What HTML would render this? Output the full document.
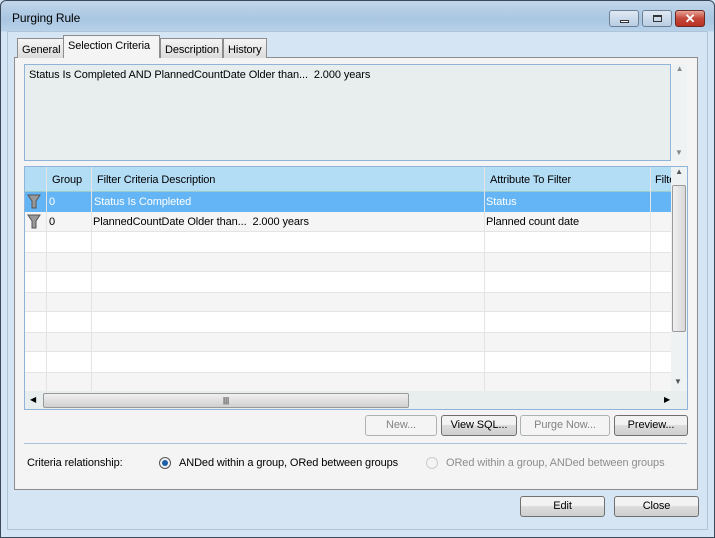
<!DOCTYPE html>
<html><head><meta charset="utf-8"><style>
*{margin:0;padding:0;box-sizing:border-box}
body{width:715px;height:538px;overflow:hidden;font-family:"Liberation Sans",sans-serif;font-size:11px;color:#000;background:#d6e5f4;letter-spacing:-0.1px}
.a{position:absolute}
.win{left:0;top:0;width:715px;height:538px;border:1px solid #3a4a5a;border-radius:6px 6px 0 0;background:linear-gradient(#c2d6ea,#a9c6e2 18px,#b9d1ea 30px,#d6e5f4 31px);}
.tab{height:20px;border:1px solid #8d8d8d;border-bottom:none;background:linear-gradient(#f4f4f4,#dcdcdc);padding:5px 0 0 4px;font-size:11px}
.btn{height:21px;border:1px solid #707070;border-radius:3px;background:linear-gradient(#f2f2f2 45%,#dcdcdc 50%,#cfcfcf);text-align:center;line-height:19px;font-size:11px}
.dis{border-color:#adb2b5;background:#f4f4f4;color:#838383}
.vl{width:1px;background:#e4e4e4}
.cell{line-height:20px}
</style></head><body>
<div class="a win"></div>
<div class="a" style="left:12px;top:11px;font-size:12px">Purging Rule</div>
<div class="a" style="left:609px;top:10px;width:30px;height:17px;border:1px solid #6d7f93;border-radius:3px;background:linear-gradient(#dfe9f4,#b8cde3)"><div class="a" style="left:10px;top:9px;width:9px;height:3px;border:1px solid #333;background:#fff"></div></div>
<div class="a" style="left:642px;top:10px;width:30px;height:17px;border:1px solid #6d7f93;border-radius:3px;background:linear-gradient(#dfe9f4,#b8cde3)"><div class="a" style="left:10px;top:4px;width:9px;height:7px;border:1px solid #333;border-top-width:2px"></div></div>
<div class="a" style="left:675px;top:10px;width:30px;height:17px;border:1px solid #6b2a22;border-radius:3px;background:linear-gradient(#e8a396,#c4473a 50%,#b93024);color:#fff;font-weight:bold;text-align:center;line-height:15px;font-size:13px">✕</div>

<div class="a" style="left:7px;top:31px;width:701px;height:499px;border:1px solid #b0c4d8;background:#d6e5f4"></div>
<div class="a" style="left:14px;top:57px;width:684px;height:433px;border:1px solid #8d8d8d;background:#f4f4f4"></div>
<div class="a tab" style="left:17px;top:38px;width:47px">General</div>
<div class="a tab" style="left:160px;top:38px;width:63px">Description</div>
<div class="a tab" style="left:223px;top:38px;width:44px">History</div>
<div class="a tab" style="left:63px;top:35px;width:97px;height:23px;background:#f4f4f4;padding-top:4px">Selection Criteria</div>

<div class="a" style="left:24px;top:64px;width:647px;height:97px;border:1px solid #8fb3d9;background:#e7eeed;padding:4px 4px"><span>Status Is Completed AND PlannedCountDate Older than...&nbsp; 2.000 years</span></div>
<div class="a" style="left:672px;top:64px;width:15px;height:97px;background:#eef2f2;color:#888;font-size:8px;text-align:center">▲<div class="a" style="left:3px;top:84px">▼</div></div>

<div class="a" style="left:24px;top:166px;width:664px;height:244px;border:1px solid #8fb3d9;background:#fff"></div>
<div class="a" style="left:25px;top:167px;width:646px;height:25px;background:#b3dcf5;border-bottom:1px solid #9cc"></div>
<div class="a cell" style="left:52px;top:170px">Group</div>
<div class="a cell" style="left:97px;top:170px">Filter Criteria Description</div>
<div class="a cell" style="left:490px;top:170px">Attribute To Filter</div>
<div class="a cell" style="left:655px;top:170px;width:16px;overflow:hidden">Filter</div>
<div class="a" style="left:25px;top:192px;width:646px;height:20px;background:#64b5f6"></div>
<div class="a" style="left:25px;top:212px;width:646px;height:20px;background:#f5f5f5;border-bottom:1px solid #e4e4e4"></div>
<div class="a" style="left:25px;top:252px;width:646px;height:20px;background:#f5f5f5;border-top:1px solid #e4e4e4;border-bottom:1px solid #e4e4e4"></div>
<div class="a" style="left:25px;top:292px;width:646px;height:20px;background:#f5f5f5;border-top:1px solid #e4e4e4;border-bottom:1px solid #e4e4e4"></div>
<div class="a" style="left:25px;top:332px;width:646px;height:20px;background:#f5f5f5;border-top:1px solid #e4e4e4;border-bottom:1px solid #e4e4e4"></div>
<div class="a" style="left:25px;top:372px;width:646px;height:19px;background:#f5f5f5;border-top:1px solid #e4e4e4"></div>
<div class="a vl" style="left:46px;top:167px;height:224px"></div>
<div class="a vl" style="left:91px;top:167px;height:224px"></div>
<div class="a vl" style="left:484px;top:167px;height:224px"></div>
<div class="a vl" style="left:650px;top:167px;height:224px"></div>
<svg class="a" style="left:27px;top:194px" width="14" height="16" viewBox="0 0 14 16"><path d="M1 1h12l-4 6v7h-4v-7z" fill="#999" stroke="#555" stroke-width="1"/></svg>
<svg class="a" style="left:27px;top:214px" width="14" height="16" viewBox="0 0 14 16"><path d="M1 1h12l-4 6v7h-4v-7z" fill="#999" stroke="#555" stroke-width="1"/></svg>
<div class="a cell" style="left:49px;top:192px;color:#fff">0</div>
<div class="a cell" style="left:94px;top:192px;color:#fff">Status Is Completed</div>
<div class="a cell" style="left:486px;top:192px;color:#fff">Status</div>
<div class="a cell" style="left:49px;top:212px">0</div>
<div class="a cell" style="left:93px;top:212px">PlannedCountDate Older than...&nbsp; 2.000 years</div>
<div class="a cell" style="left:486px;top:212px">Planned count date</div>
<div class="a" style="left:671px;top:167px;width:16px;height:224px;background:#eef2f2;color:#555;font-size:8px;text-align:center">▲<div class="a" style="left:3px;top:210px">▼</div></div>
<div class="a" style="left:672px;top:185px;width:14px;height:147px;border:1px solid #999;border-radius:2px;background:linear-gradient(90deg,#f0f0f0,#d8d8d8)"></div>
<div class="a" style="left:25px;top:391px;width:662px;height:18px;background:#e7eeed"></div>
<div class="a" style="left:43px;top:393px;width:366px;height:15px;border:1px solid #999;border-radius:2px;background:linear-gradient(#f0f0f0,#d0d0d0);text-align:center;font-size:8px;line-height:13px">|||</div>
<div class="a" style="left:30px;top:395px;font-size:8px">◀</div>
<div class="a" style="left:664px;top:395px;font-size:8px">▶</div>

<div class="a btn dis" style="left:365px;top:415px;width:72px">New...</div>
<div class="a btn" style="left:441px;top:415px;width:76px">View SQL...</div>
<div class="a btn dis" style="left:520px;top:415px;width:90px">Purge Now...</div>
<div class="a btn" style="left:614px;top:415px;width:74px">Preview...</div>
<div class="a" style="left:24px;top:443px;width:663px;height:1px;background:#a9c1d7"></div>
<div class="a" style="left:27px;top:457px">Criteria relationship:</div>
<div class="a" style="left:159px;top:457px;width:12px;height:12px;border:1px solid #555;border-radius:50%;background:#f0f0f0"><div class="a" style="left:2px;top:2px;width:6px;height:6px;border-radius:50%;background:#1b5fa8"></div></div>
<div class="a" style="left:179px;top:457px">ANDed within a group, ORed between groups</div>
<div class="a" style="left:426px;top:457px;width:12px;height:12px;border:1px solid #ccc;border-radius:50%;background:#f4f4f4"></div>
<div class="a" style="left:446px;top:457px;color:#8d8d8d">ORed within a group, ANDed between groups</div>

<div class="a btn" style="left:520px;top:496px;width:85px">Edit</div>
<div class="a btn" style="left:614px;top:496px;width:85px">Close</div>
</body></html>
